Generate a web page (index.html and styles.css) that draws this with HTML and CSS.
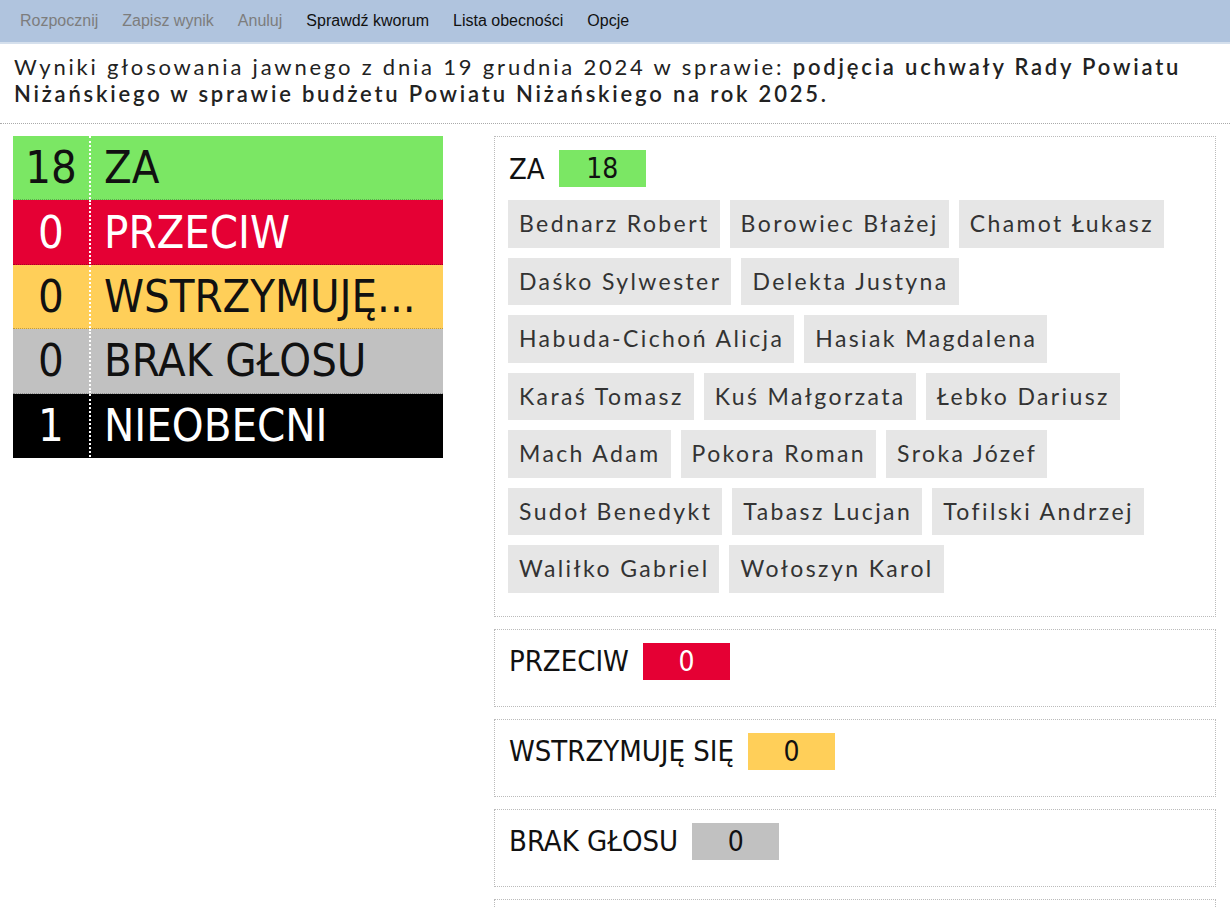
FILE: index.html
```html
<!DOCTYPE html>
<html lang="pl">
<head>
    <meta charset="UTF-8">
    <meta name="viewport" content="width=device-width, initial-scale=1.0">
    <title>Wyniki głosowania</title>
    <link rel="stylesheet" href="styles.css">
</head>
<body>
    <nav class="menu">
        <span class="menu-item disabled">Rozpocznij</span>
        <span class="menu-item disabled">Zapisz wynik</span>
        <span class="menu-item disabled">Anuluj</span>
        <span class="menu-item">Sprawdź kworum</span>
        <span class="menu-item">Lista obecności</span>
        <span class="menu-item">Opcje</span>
    </nav>

    <header class="title">
        Wyniki głosowania jawnego z dnia 19 grudnia 2024 w sprawie: <strong>podjęcia uchwały Rady Powiatu Niżańskiego w sprawie budżetu Powiatu Niżańskiego na rok 2025.</strong>
    </header>

    <div class="container">
        <div class="summary">
            <div class="summary-row za"><span class="count">18</span><span class="label">ZA</span></div>
            <div class="summary-row przeciw"><span class="count">0</span><span class="label">PRZECIW</span></div>
            <div class="summary-row wstrzymuje"><span class="count">0</span><span class="label">WSTRZYMUJĘ...</span></div>
            <div class="summary-row brak"><span class="count">0</span><span class="label">BRAK GŁOSU</span></div>
            <div class="summary-row nieobecni"><span class="count">1</span><span class="label">NIEOBECNI</span></div>
        </div>

        <div class="details">
            <div class="vote-box">
                <div class="vote-head"><span class="vote-title">ZA</span><span class="badge za">18</span></div>
                <div class="names">
                    <span class="name">Bednarz Robert</span>
                    <span class="name">Borowiec Błażej</span>
                    <span class="name">Chamot Łukasz</span>
                    <span class="name">Daśko Sylwester</span>
                    <span class="name">Delekta Justyna</span>
                    <span class="name">Habuda-Cichoń Alicja</span>
                    <span class="name">Hasiak Magdalena</span>
                    <span class="name">Karaś Tomasz</span>
                    <span class="name">Kuś Małgorzata</span>
                    <span class="name">Łebko Dariusz</span>
                    <span class="name">Mach Adam</span>
                    <span class="name">Pokora Roman</span>
                    <span class="name">Sroka Józef</span>
                    <span class="name">Sudoł Benedykt</span>
                    <span class="name">Tabasz Lucjan</span>
                    <span class="name">Tofilski Andrzej</span>
                    <span class="name">Waliłko Gabriel</span>
                    <span class="name">Wołoszyn Karol</span>
                </div>
            </div>
            <div class="vote-box">
                <div class="vote-head"><span class="vote-title">PRZECIW</span><span class="badge przeciw">0</span></div>
                <div class="names"></div>
            </div>
            <div class="vote-box">
                <div class="vote-head"><span class="vote-title">WSTRZYMUJĘ SIĘ</span><span class="badge wstrzymuje">0</span></div>
                <div class="names"></div>
            </div>
            <div class="vote-box">
                <div class="vote-head"><span class="vote-title">BRAK GŁOSU</span><span class="badge brak">0</span></div>
                <div class="names"></div>
            </div>
            <div class="vote-box">
                <div class="vote-head"><span class="vote-title">NIEOBECNI</span><span class="badge nieobecni">1</span></div>
                <div class="names"></div>
            </div>
        </div>
    </div>
</body>
</html>
```

FILE: styles.css
```css
body {
    font-family: Lato, "Open Sans", sans-serif;
    margin: 0;
    padding: 0;
    background-color: #fff;
    color: #222;
}
.menu {
    display: flex;
    gap: 24px;
    height: 42px;
    align-items: center;
    padding: 0 20px;
    background: #b0c4de;
    border-bottom: 2px solid #d5e0ed;
    font-family: "Liberation Sans", Arial, sans-serif;
    font-size: 16px;
}
.menu-item {
    color: #111;
}
.menu-item.disabled {
    color: #7d7d7d;
}
.title {
    padding: 9px 14px 16px;
    font-size: 22px;
    line-height: 27px;
    letter-spacing: 2.8px;
    border-bottom: 1px dotted #aaa;
}
.title strong {
    font-weight: 600;
}
.container {
    display: grid;
    grid-template-columns: 430px 1fr;
    gap: 51px;
    padding: 12px 14px 0 13px;
    align-items: start;
}

/* summary table on the left */
.summary {
    font-family: "DejaVu Sans Condensed", "Liberation Sans", sans-serif;
    font-size: 45px;
}
.summary-row {
    display: flex;
    height: 64.4px;
    box-sizing: border-box;
    align-items: center;
    border-bottom: 1px dotted rgba(0,0,0,0.25);
}
.summary-row .count {
    width: 76px;
    height: 100%;
    display: flex;
    align-items: center;
    justify-content: center;
    border-right: 2px dotted #fff;
}
.summary-row .label {
    padding-left: 13px;
    white-space: nowrap;
}
.za { background: #7be764; color: #111; }
.przeciw { background: #e50034; color: #fff; }
.wstrzymuje { background: #ffcf59; color: #111; }
.brak { background: #c1c1c1; color: #111; }
.nieobecni { background: #000; color: #fff; }

/* detail boxes on the right */
.vote-box {
    border: 1px dotted #bbb;
    padding: 13px 14px 13px 13px;
    margin-bottom: 12px;
}
.vote-head {
    display: flex;
    align-items: center;
    height: 37px;
    margin-bottom: 13px;
    font-family: "DejaVu Sans Condensed", "Liberation Sans", sans-serif;
}
.vote-title {
    font-size: 29px;
    margin-left: 1px;
    color: #111;
}
.badge {
    width: 87px;
    height: 37px;
    margin-left: 14px;
    display: flex;
    align-items: center;
    justify-content: center;
    font-size: 28px;
}
.names {
    display: flex;
    flex-wrap: wrap;
}
.name {
    background: #e6e6e6;
    color: #333;
    font-size: 23px;
    line-height: 27.5px;
    letter-spacing: 2.4px;
    padding: 10px 10px 10px 11px;
    margin: 0 10px 10px 0;
}
```
